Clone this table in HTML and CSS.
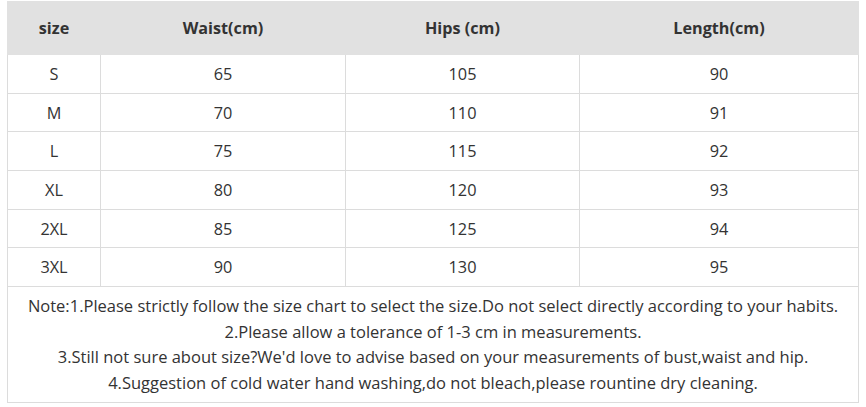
FILE: index.html
```html
<!DOCTYPE html>
<html>
<head>
<meta charset="utf-8">
<link rel="stylesheet" href="styles.css">
</head>
<body>
<table class="chart">
  <colgroup>
    <col class="c1"><col class="c2"><col class="c3"><col class="c4">
  </colgroup>
  <thead>
    <tr><th>size</th><th>Waist(cm)</th><th>Hips (cm)</th><th>Length(cm)</th></tr>
  </thead>
  <tbody>
    <tr><td>S</td><td>65</td><td>105</td><td>90</td></tr>
    <tr><td>M</td><td>70</td><td>110</td><td>91</td></tr>
    <tr><td>L</td><td>75</td><td>115</td><td>92</td></tr>
    <tr><td>XL</td><td>80</td><td>120</td><td>93</td></tr>
    <tr><td>2XL</td><td>85</td><td>125</td><td>94</td></tr>
    <tr><td>3XL</td><td>90</td><td>130</td><td>95</td></tr>
    <tr class="note-row"><td colspan="4" class="note">
      <div>Note:1.Please strictly follow the size chart to select the size.Do not select directly according to your habits.</div>
      <div>2.Please allow a tolerance of 1-3 cm in measurements.</div>
      <div>3.Still not sure about size?We'd love to advise based on your measurements of bust,waist and hip.</div>
      <div>4.Suggestion of cold water hand washing,do not bleach,please rountine dry cleaning.</div>
    </td></tr>
  </tbody>
</table>
</body>
</html>
```
FILE: styles.css
```css
html, body { margin: 0; padding: 0; background: #fff; }
body { padding: 1px 0 0 7px; }
.chart {
  border-collapse: collapse;
  table-layout: fixed;
  width: 851px;
  font-family: "Open Sans", "Noto Sans", sans-serif;
  color: #333;
  font-size: 16.3px;
}
.c1 { width: 93px; }
.c2 { width: 245px; }
.c3 { width: 234px; }
.c4 { width: 279px; }
.chart th {
  background: #e1e1e1;
  height: 52px;
  padding: 0;
  font-weight: 700;
  font-size: 16.2px;
  border: 1px solid #e1e1e1;
  text-align: center;
}
.chart td {
  height: 37.7px;
  padding: 0;
  text-align: center;
  border: 1px solid #dcdcdc;
}
.chart .note {
  height: auto;
  padding: 6px 0 7px;
  font-size: 16.5px;
  line-height: 25.5px;
}
```
